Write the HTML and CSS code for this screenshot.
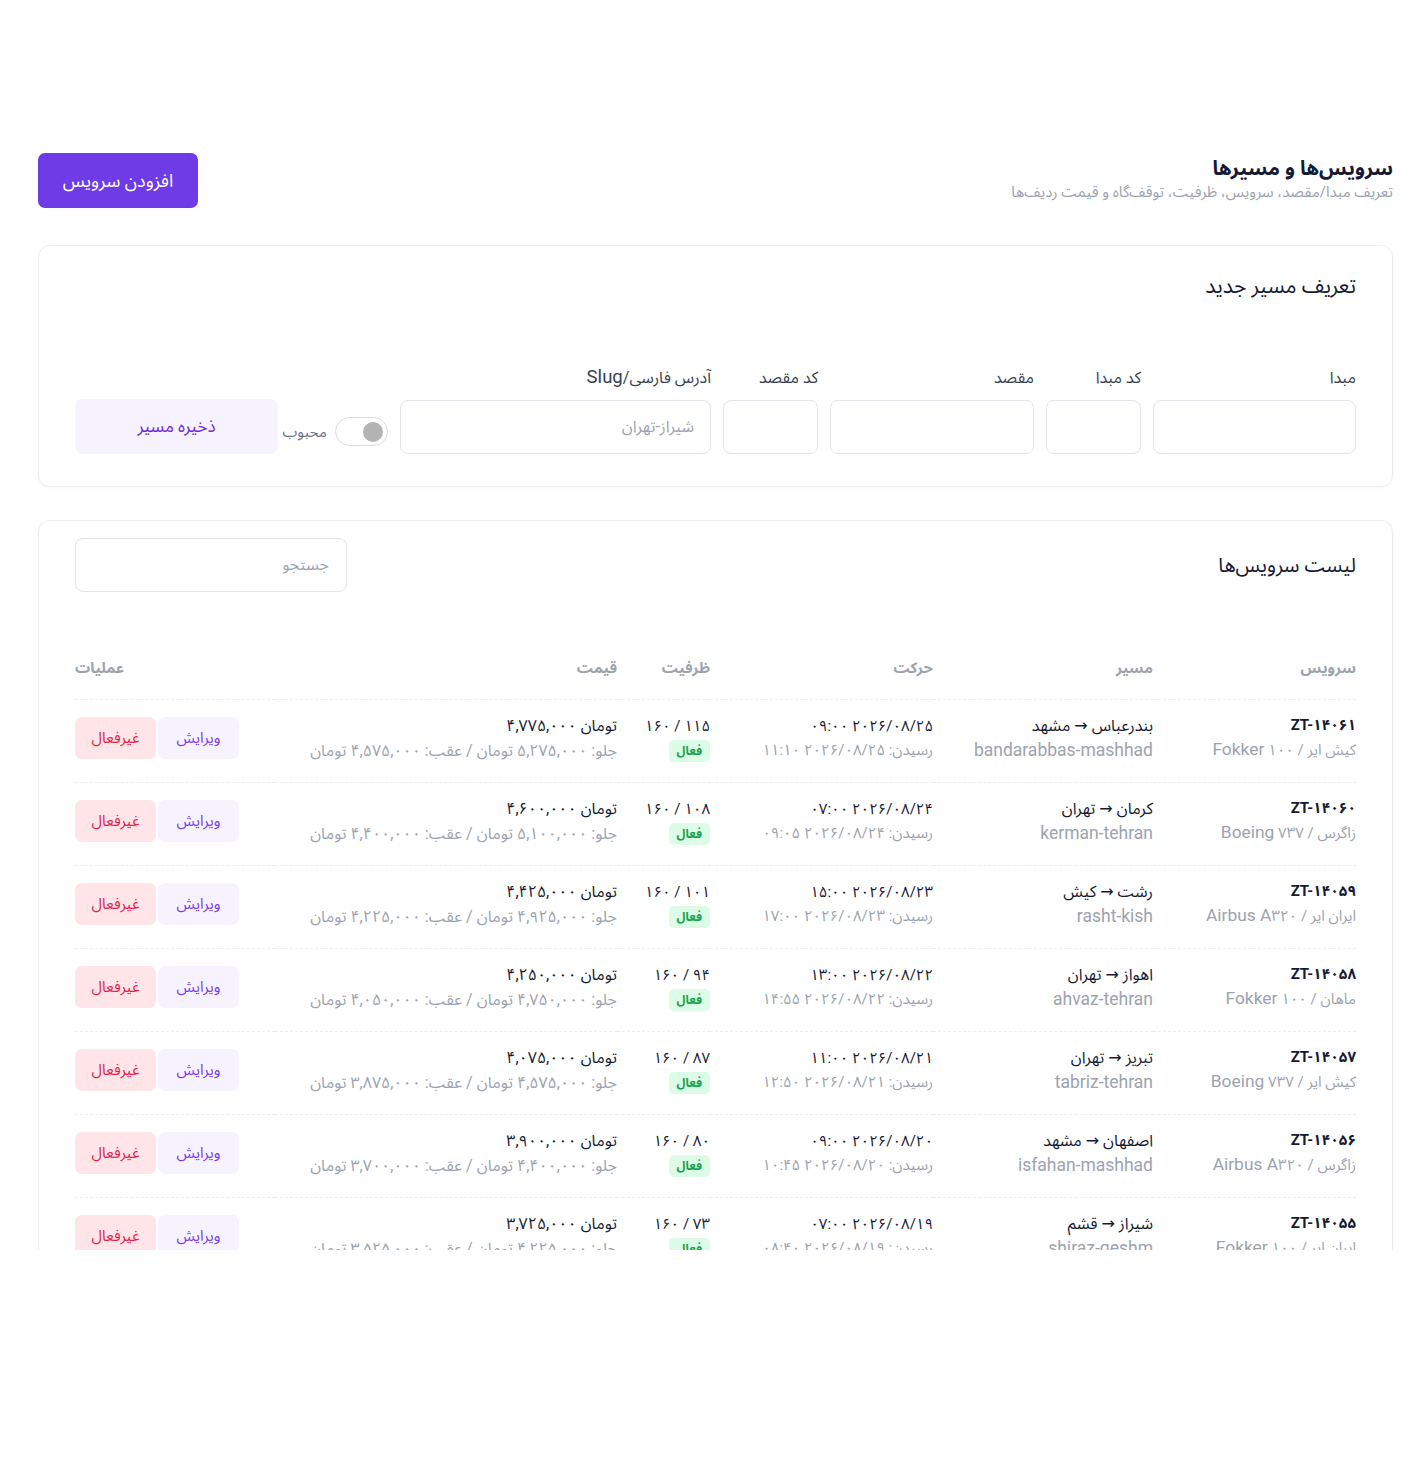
FILE: index.html
```html
<!DOCTYPE html>
<html lang="fa" dir="rtl">
<head>
<meta charset="utf-8">
<title>سرویس‌ها و مسیرها</title>
<link rel="stylesheet" href="styles.css">
</head>
<body>
<div class="viewport">
  <main class="page">
    <header class="page-head">
      <div class="head-text">
        <h1 class="page-title">سرویس‌ها و مسیرها</h1>
        <p class="page-sub">تعریف مبدا/مقصد، سرویس، ظرفیت، توقف‌گاه و قیمت ردیف‌ها</p>
      </div>
      <button class="btn-primary">افزودن سرویس</button>
    </header>

    <section class="card route-card">
      <h2 class="card-title">تعریف مسیر جدید</h2>
      <div class="route-form">
        <label class="field"><span class="lbl">مبدا</span><span class="input"></span></label>
        <label class="field"><span class="lbl">کد مبدا</span><span class="input"></span></label>
        <label class="field"><span class="lbl">مقصد</span><span class="input"></span></label>
        <label class="field"><span class="lbl">کد مقصد</span><span class="input"></span></label>
        <label class="field"><span class="lbl">آدرس فارسی/<span class="lat">Slug</span></span><span class="input placeholder">شیراز-تهران</span></label>
        <div class="form-end">
          <div class="toggle-group">
            <span class="toggle"><span class="knob"></span></span>
            <span class="toggle-lbl">محبوب</span>
          </div>
          <button class="btn-soft">ذخیره مسیر</button>
        </div>
      </div>
    </section>

    <section class="card list-card">
      <div class="list-head">
        <h2 class="card-title">لیست سرویس‌ها</h2>
        <div class="search">جستجو</div>
      </div>
      <table class="tbl">
        <colgroup>
          <col class="c-svc"><col class="c-route"><col class="c-move"><col class="c-cap"><col class="c-price"><col class="c-act">
        </colgroup>
        <thead>
          <tr><th>سرویس</th><th>مسیر</th><th>حرکت</th><th>ظرفیت</th><th>قیمت</th><th class="th-act">عملیات</th></tr>
        </thead>
        <tbody>
          <tr>
            <td><div class="l1 b">ZT-۱۴۰۶۱</div><div class="l2">کیش ایر / <span class="lat">Fokker</span> ۱۰۰</div></td>
            <td><div class="l1 rt">بندرعباس → مشهد</div><div class="l2 lat">bandarabbas-mashhad</div></td>
            <td><div class="l1">۲۰۲۶/۰۸/۲۵ ۰۹:۰۰</div><div class="l2">رسیدن: ۲۰۲۶/۰۸/۲۵ ۱۱:۱۰</div></td>
            <td><div class="l1">۱۱۵ / ۱۶۰</div><div class="l2"><span class="badge">فعال</span></div></td>
            <td class="td-price"><div class="l1"><span dir="ltr">۴,۷۷۵,۰۰۰ تومان</span></div><div class="l2">جلو: ۵,۲۷۵,۰۰۰ تومان / عقب: ۴,۵۷۵,۰۰۰ تومان</div></td>
            <td class="td-act"><div class="acts"><button class="btn-edit">ویرایش</button><button class="btn-off">غیرفعال</button></div></td>
          </tr>
          <tr>
            <td><div class="l1 b">ZT-۱۴۰۶۰</div><div class="l2">زاگرس / <span class="lat">Boeing</span> ۷۳۷</div></td>
            <td><div class="l1 rt">کرمان → تهران</div><div class="l2 lat">kerman-tehran</div></td>
            <td><div class="l1">۲۰۲۶/۰۸/۲۴ ۰۷:۰۰</div><div class="l2">رسیدن: ۲۰۲۶/۰۸/۲۴ ۰۹:۰۵</div></td>
            <td><div class="l1">۱۰۸ / ۱۶۰</div><div class="l2"><span class="badge">فعال</span></div></td>
            <td class="td-price"><div class="l1"><span dir="ltr">۴,۶۰۰,۰۰۰ تومان</span></div><div class="l2">جلو: ۵,۱۰۰,۰۰۰ تومان / عقب: ۴,۴۰۰,۰۰۰ تومان</div></td>
            <td class="td-act"><div class="acts"><button class="btn-edit">ویرایش</button><button class="btn-off">غیرفعال</button></div></td>
          </tr>
          <tr>
            <td><div class="l1 b">ZT-۱۴۰۵۹</div><div class="l2">ایران ایر / <span class="lat">Airbus A</span>۳۲۰</div></td>
            <td><div class="l1 rt">رشت → کیش</div><div class="l2 lat">rasht-kish</div></td>
            <td><div class="l1">۲۰۲۶/۰۸/۲۳ ۱۵:۰۰</div><div class="l2">رسیدن: ۲۰۲۶/۰۸/۲۳ ۱۷:۰۰</div></td>
            <td><div class="l1">۱۰۱ / ۱۶۰</div><div class="l2"><span class="badge">فعال</span></div></td>
            <td class="td-price"><div class="l1"><span dir="ltr">۴,۴۲۵,۰۰۰ تومان</span></div><div class="l2">جلو: ۴,۹۲۵,۰۰۰ تومان / عقب: ۴,۲۲۵,۰۰۰ تومان</div></td>
            <td class="td-act"><div class="acts"><button class="btn-edit">ویرایش</button><button class="btn-off">غیرفعال</button></div></td>
          </tr>
          <tr>
            <td><div class="l1 b">ZT-۱۴۰۵۸</div><div class="l2">ماهان / <span class="lat">Fokker</span> ۱۰۰</div></td>
            <td><div class="l1 rt">اهواز → تهران</div><div class="l2 lat">ahvaz-tehran</div></td>
            <td><div class="l1">۲۰۲۶/۰۸/۲۲ ۱۳:۰۰</div><div class="l2">رسیدن: ۲۰۲۶/۰۸/۲۲ ۱۴:۵۵</div></td>
            <td><div class="l1">۹۴ / ۱۶۰</div><div class="l2"><span class="badge">فعال</span></div></td>
            <td class="td-price"><div class="l1"><span dir="ltr">۴,۲۵۰,۰۰۰ تومان</span></div><div class="l2">جلو: ۴,۷۵۰,۰۰۰ تومان / عقب: ۴,۰۵۰,۰۰۰ تومان</div></td>
            <td class="td-act"><div class="acts"><button class="btn-edit">ویرایش</button><button class="btn-off">غیرفعال</button></div></td>
          </tr>
          <tr>
            <td><div class="l1 b">ZT-۱۴۰۵۷</div><div class="l2">کیش ایر / <span class="lat">Boeing</span> ۷۳۷</div></td>
            <td><div class="l1 rt">تبریز → تهران</div><div class="l2 lat">tabriz-tehran</div></td>
            <td><div class="l1">۲۰۲۶/۰۸/۲۱ ۱۱:۰۰</div><div class="l2">رسیدن: ۲۰۲۶/۰۸/۲۱ ۱۲:۵۰</div></td>
            <td><div class="l1">۸۷ / ۱۶۰</div><div class="l2"><span class="badge">فعال</span></div></td>
            <td class="td-price"><div class="l1"><span dir="ltr">۴,۰۷۵,۰۰۰ تومان</span></div><div class="l2">جلو: ۴,۵۷۵,۰۰۰ تومان / عقب: ۳,۸۷۵,۰۰۰ تومان</div></td>
            <td class="td-act"><div class="acts"><button class="btn-edit">ویرایش</button><button class="btn-off">غیرفعال</button></div></td>
          </tr>
          <tr>
            <td><div class="l1 b">ZT-۱۴۰۵۶</div><div class="l2">زاگرس / <span class="lat">Airbus A</span>۳۲۰</div></td>
            <td><div class="l1 rt">اصفهان → مشهد</div><div class="l2 lat">isfahan-mashhad</div></td>
            <td><div class="l1">۲۰۲۶/۰۸/۲۰ ۰۹:۰۰</div><div class="l2">رسیدن: ۲۰۲۶/۰۸/۲۰ ۱۰:۴۵</div></td>
            <td><div class="l1">۸۰ / ۱۶۰</div><div class="l2"><span class="badge">فعال</span></div></td>
            <td class="td-price"><div class="l1"><span dir="ltr">۳,۹۰۰,۰۰۰ تومان</span></div><div class="l2">جلو: ۴,۴۰۰,۰۰۰ تومان / عقب: ۳,۷۰۰,۰۰۰ تومان</div></td>
            <td class="td-act"><div class="acts"><button class="btn-edit">ویرایش</button><button class="btn-off">غیرفعال</button></div></td>
          </tr>
          <tr>
            <td><div class="l1 b">ZT-۱۴۰۵۵</div><div class="l2">ایران ایر / <span class="lat">Fokker</span> ۱۰۰</div></td>
            <td><div class="l1 rt">شیراز → قشم</div><div class="l2 lat">shiraz-qeshm</div></td>
            <td><div class="l1">۲۰۲۶/۰۸/۱۹ ۰۷:۰۰</div><div class="l2">رسیدن: ۲۰۲۶/۰۸/۱۹ ۰۸:۴۰</div></td>
            <td><div class="l1">۷۳ / ۱۶۰</div><div class="l2"><span class="badge">فعال</span></div></td>
            <td class="td-price"><div class="l1"><span dir="ltr">۳,۷۲۵,۰۰۰ تومان</span></div><div class="l2">جلو: ۴,۲۲۵,۰۰۰ تومان / عقب: ۳,۵۲۵,۰۰۰ تومان</div></td>
            <td class="td-act"><div class="acts"><button class="btn-edit">ویرایش</button><button class="btn-off">غیرفعال</button></div></td>
          </tr>
        </tbody>
      </table>
    </section>
  </main>
</div>
</body>
</html>
```

FILE: styles.css
```css
* { box-sizing: border-box; }
html, body { margin: 0; padding: 0; background: #fff; }
body {
  font-family: Roboto, "Noto Sans Arabic", "Vazirmatn", "DejaVu Sans", sans-serif;
  color: #1f2937;
  direction: rtl;
}
.viewport { height: 1250px; overflow: hidden; }
.page { padding: 153px 31px 0 38px; }
.lat { font-size: 1.16em; }

.page-head {
  display: flex;
  justify-content: space-between;
  align-items: center;
  margin-bottom: 37px;
}
.head-text { padding-bottom: 6px; }
.page-title {
  margin: 0;
  font-size: 20px;
  font-weight: 700;
  color: #141a33;
  line-height: 28px;
}
.page-sub {
  margin: 0;
  font-size: 15px;
  color: #9ca3af;
  line-height: 20px;
}
.btn-primary {
  width: 160px;
  height: 55px;
  border: 0;
  border-radius: 7px;
  background: #6e3be6;
  color: #fff;
  font-family: inherit;
  font-size: 18px;
}

.card {
  border: 1px solid #edeef2;
  border-radius: 12px;
  box-shadow: 0 1px 3px rgba(17, 24, 39, 0.04);
  background: #fff;
}
.route-card { padding: 26px 36px 32px; margin-bottom: 33px; }
.card-title {
  margin: 0;
  font-size: 20px;
  font-weight: 400;
  color: #141a33;
  line-height: 28px;
}
.route-card .card-title { margin-bottom: 67px; font-size: 21px; }

.route-form {
  display: grid;
  grid-template-columns: 203px 95px 204px 95px 311px 1fr;
  gap: 12px;
  align-items: end;
}
.field { display: flex; flex-direction: column; }
.lbl {
  font-size: 16px;
  color: #374151;
  line-height: 20px;
  margin-bottom: 12px;
}
.input {
  height: 54px;
  border: 1px solid #e2e4e9;
  border-radius: 8px;
  display: flex;
  align-items: center;
  padding: 0 16px;
  font-size: 16px;
}
.placeholder { color: #9ca3af; }
.form-end {
  display: flex;
  justify-content: space-between;
  align-items: center;
  height: 55px;
}
.toggle-group { display: flex; align-items: center; gap: 8px; margin-top: 10px; }
.toggle {
  width: 53px;
  height: 29px;
  border: 1px solid #d9dbe0;
  border-radius: 15px;
  display: flex;
  align-items: center;
  padding: 0 4px;
}
.knob {
  width: 20px;
  height: 20px;
  border-radius: 50%;
  background: #b3b3b3;
}
.toggle-lbl { font-size: 15px; color: #6b7280; }
.btn-soft {
  width: 203px;
  height: 55px;
  border: 0;
  border-radius: 8px;
  background: #f6f3ff;
  color: #6d28d9;
  font-family: inherit;
  font-size: 17px;
}

.list-card { padding: 17px 36px 40px; }
.list-head {
  display: flex;
  justify-content: space-between;
  align-items: center;
  margin-bottom: 51px;
}
.search {
  width: 272px;
  height: 54px;
  border: 1px solid #e2e4e9;
  border-radius: 8px;
  display: flex;
  align-items: center;
  padding: 0 17px;
  color: #9ca3af;
  font-size: 16px;
}

.tbl { width: 100%; border-collapse: collapse; table-layout: fixed; }
.c-svc { width: 203px; }
.c-route { width: 220px; }
.c-move { width: 223px; }
.c-cap { width: 93px; }
.c-act { width: 200px; }
.tbl th {
  text-align: right;
  font-size: 15px;
  font-weight: 700;
  color: #9ca3af;
  padding: 14px 0 20px;
  line-height: 22px;
  border-bottom: 1px dashed #eceef1;
}
.tbl th.th-act { text-align: left; }
.tbl td {
  text-align: right;
  vertical-align: middle;
  padding: 13px 0 19px;
  border-bottom: 1px dashed #eceef1;
  white-space: nowrap;
}
.l1 { font-size: 15px; line-height: 24px; color: #141a33; }
.l1.b { font-weight: 700; }
.l1.rt { font-size: 16px; }
.l2 { font-size: 15px; line-height: 25px; color: #9ca3af; }
.l2.lat { font-size: 17.5px; }
.td-price .l1, .td-price .l2 { font-size: 16px; }
.badge {
  display: inline-block;
  background: #dcfce7;
  color: #16a34a;
  font-size: 12px;
  font-weight: 700;
  line-height: 22px;
  padding: 0 8px;
  border-radius: 5px;
}
.td-act { text-align: left; }
.acts { display: flex; justify-content: flex-end; gap: 2px; }
.btn-edit, .btn-off {
  width: 81px;
  height: 42px;
  border: 0;
  border-radius: 7px;
  font-family: inherit;
  font-size: 15px;
}
.btn-edit { background: #f6f3ff; color: #7c3aed; }
.btn-off { background: #ffe4e8; color: #e11d48; }
```
